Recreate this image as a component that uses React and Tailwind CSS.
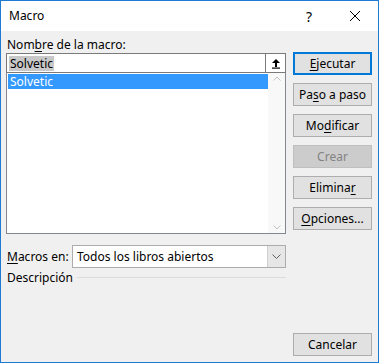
import React from "react";

const U = ({ children }) => <span className="underline underline-offset-2">{children}</span>;

function Btn({ children, focused, disabled, className = "" }) {
  return (
    <div
      className={
        "h-[23px] w-[79px] flex items-center justify-center text-[12px] " +
        (focused
          ? "border-2 border-[#0078d7] bg-[#e1e1e1] text-black"
          : disabled
          ? "border border-[#bfbfbf] bg-[#cccccc] text-[#838383]"
          : "border border-[#adadad] bg-[#e1e1e1] text-black") +
        " " +
        className
      }
    >
      {children}
    </div>
  );
}

export default function App() {
  return (
    <div
      className="w-[379px] h-[363px] border border-[#1f7bd2] bg-[#f0f0f0] flex flex-col text-black"
      style={{ fontFamily: '"Noto Sans", "Open Sans", sans-serif' }}
    >
      <div className="h-[30px] bg-white flex items-center pl-[8px] shrink-0">
        <span className="text-[12px] flex-1">Macro</span>
        <span className="text-[14px] w-[46px] text-center">?</span>
        <span className="w-[46px] flex justify-center">
          <svg width="12" height="12" viewBox="0 0 12 12">
            <path d="M1 1 L11 11 M11 1 L1 11" stroke="#000" strokeWidth="1" />
          </svg>
        </span>
      </div>
      <div className="flex-1 flex px-[5px] pt-[5px] pb-[6px] gap-[6px]">
        <div className="w-[280px] flex flex-col">
          <div className="text-[12px] h-[17px] leading-[17px] pl-[1px]">
            Nom<U>b</U>re de la macro:
          </div>
          <div className="h-[20px] border border-[#7a7a7a] bg-white flex items-stretch">
            <div className="flex-1 flex items-center pl-[2px]">
              <span className="bg-[#c8c8c8] text-[12px] leading-[15px] px-[1px]">Solvetic</span>
            </div>
            <div className="w-[20px] flex items-center justify-center border-l border-[#7a7a7a] bg-white">
              <svg width="10" height="11" viewBox="0 0 10 11">
                <path d="M5 1 L1 5 L4 5 L4 9 L6 9 L6 5 L9 5 Z" fill="#000" />
                <rect x="1" y="9.5" width="8" height="1.2" fill="#000" />
              </svg>
            </div>
          </div>
          <div className="h-[161px] border border-[#828790] border-t-0 bg-white flex">
            <div className="flex-1 pt-[1px] pl-[1px]">
              <div className="bg-[#3399ff] text-white text-[12px] h-[15px] leading-[15px] pl-[2px]">Solvetic</div>
            </div>
            <div className="w-[17px] flex flex-col justify-between items-center py-[3px] bg-[#f8f8f8]">
              <svg width="8" height="5" viewBox="0 0 8 5">
                <path d="M0.5 4.5 L4 1 L7.5 4.5" stroke="#c2c2c2" fill="none" />
              </svg>
              <svg width="8" height="5" viewBox="0 0 8 5">
                <path d="M0.5 0.5 L4 4 L7.5 0.5" stroke="#c2c2c2" fill="none" />
              </svg>
            </div>
          </div>
          <div className="flex items-center mt-[11px] h-[23px]">
            <span className="text-[12px] w-[66px] pl-[1px]">
              <U>M</U>acros en:
            </span>
            <div className="flex-1 h-[23px] border border-[#acacac] bg-white flex items-stretch">
              <div className="flex-1 text-[12px] flex items-center pl-[4px]">Todos los libros abiertos</div>
              <div className="w-[18px] bg-[#e6e6e6] border-l border-[#cfcfcf] flex items-center justify-center">
                <svg width="9" height="6" viewBox="0 0 9 6">
                  <path d="M0.5 0.5 L4.5 4.5 L8.5 0.5" stroke="#606060" fill="none" />
                </svg>
              </div>
            </div>
          </div>
          <div className="flex items-center mt-[1px] h-[17px]">
            <span className="text-[12px] pl-[1px] pr-[4px]">Descripción</span>
            <div className="flex-1 h-px bg-[#dcdcdc]" />
          </div>
        </div>
        <div className="flex flex-col pt-[16px] pl-[1px]">
          <Btn focused>
            <U>E</U>jecutar
          </Btn>
          <Btn className="mt-[8px]">
            Pa<U>s</U>o a paso
          </Btn>
          <Btn className="mt-[8px]">
            Mo<U>d</U>ificar
          </Btn>
          <Btn disabled className="mt-[8px]">
            Crear
          </Btn>
          <Btn className="mt-[8px]">
            Elimina<U>r</U>
          </Btn>
          <Btn className="mt-[8px]">
            <U>O</U>pciones...
          </Btn>
          <div className="flex-1" />
          <Btn>Cancelar</Btn>
        </div>
      </div>
    </div>
  );
}
